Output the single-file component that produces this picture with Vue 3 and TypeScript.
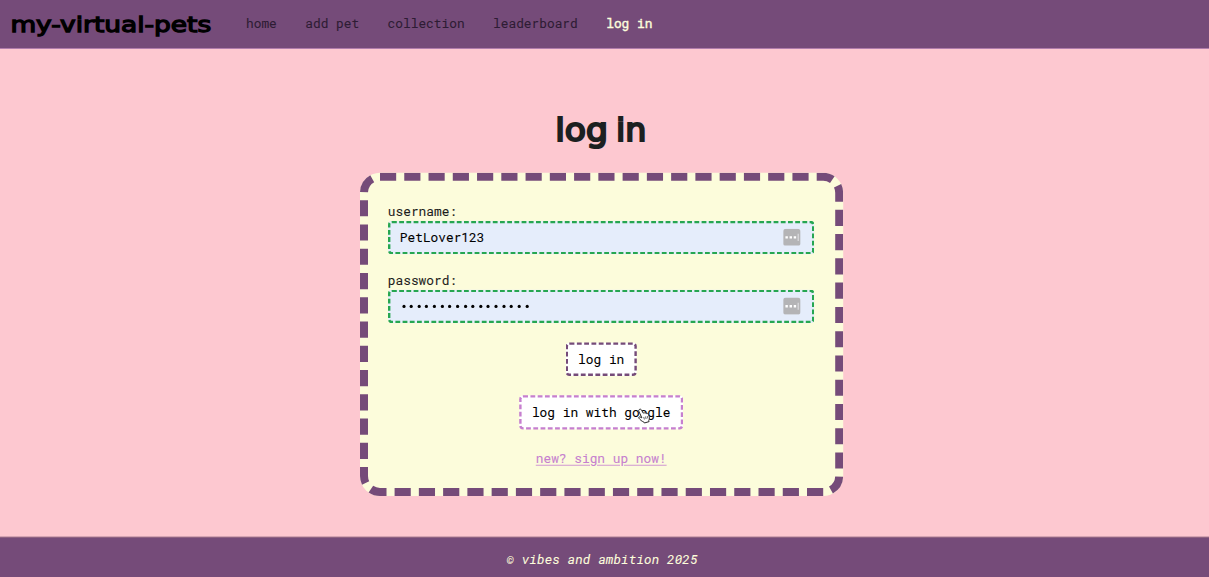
<script setup lang="ts">
import { ref } from 'vue'

interface NavItem {
  label: string
  active?: boolean
}

const navItems: NavItem[] = [
  { label: 'home' },
  { label: 'add pet' },
  { label: 'collection' },
  { label: 'leaderboard' },
  { label: 'log in', active: true },
]

const username = ref('PetLover123')
const passwordLength = 17
</script>

<template>
  <div class="viewport">
    <div class="page">
      <header class="header">
        <div class="brand"><svg class="word" width="254" height="40"><text x="0" y="31" textLength="251" lengthAdjust="spacingAndGlyphs">my-virtual-pets</text></svg></div>
        <nav class="nav">
          <a v-for="item in navItems" :key="item.label" :class="{ active: item.active }">{{ item.label }}</a>
        </nav>
      </header>

      <main class="main">
        <h1 class="title"><svg class="word" width="112" height="60"><text x="-2" y="40.5" textLength="66" lengthAdjust="spacingAndGlyphs">log</text><text x="74" y="40.5" textLength="38" lengthAdjust="spacingAndGlyphs">in</text></svg></h1>
        <form class="card">
          <svg class="card-border" width="604" height="404"><rect x="5" y="5" width="594" height="394" rx="20" pathLength="1536" stroke-dasharray="16 8" fill="none" stroke="#754b79" stroke-width="10" /></svg>
          <label class="label">username:</label>
          <div class="field">
            <span>{{ username }}</span>
            <svg class="key" viewBox="0 0 17 17"><rect width="17" height="17" rx="2.8" fill="#b4b4b6" /><path d="M2.200 7.300h2.400v2.400H2.200zM6.300 7.300h2.400v2.400H6.300zM10.400 7.300h2.400v2.400h-2.400z" fill="#fff" /><path d="M14.800 5v7" stroke="#e4e4e6" stroke-width="1" /></svg>
          </div>
          <label class="label">password:</label>
          <div class="field">
            <span class="dots"><i v-for="n in passwordLength" :key="n"></i></span>
            <svg class="key" viewBox="0 0 17 17"><rect width="17" height="17" rx="2.8" fill="#b4b4b6" /><path d="M2.200 7.300h2.400v2.400H2.200zM6.300 7.300h2.400v2.400H6.300zM10.400 7.300h2.400v2.400h-2.400z" fill="#fff" /><path d="M14.800 5v7" stroke="#e4e4e6" stroke-width="1" /></svg>
          </div>
          <button type="button" class="btn">log in</button>
          <button type="button" class="btn google">
            log in with google
            <svg class="cursor" viewBox="0 0 14 16"><path d="M2 1.200c.9-.5 1.700 0 2.100.8l1.700 3.100c.5-.6 1.400-.5 1.800.1.600-.5 1.500-.3 1.800.4.800-.3 1.500.1 1.800.9l.8 2.300c.4 1.500.1 2.600-.5 3.600l.3 1.400-4.800 1.400-.8-1.200C4.200 13.500 2.800 12 1.300 10.200c-.5-.9.4-1.600 1.300-1.200l1.800.9L1.200 3c-.3-.8 0-1.400.8-1.800z" fill="#fff" stroke="#222" stroke-width="1" /><path d="M6.300 9l.7 2.600M8.100 8.500l.7 2.600M9.900 8l.7 2.600" stroke="#222" stroke-width=".7" fill="none" /></svg>
          </button>
          <a class="signup">new? sign up now!</a>
        </form>
      </main>

      <footer class="footer">© vibes and ambition 2025</footer>
    </div>
  </div>
</template>

<style>
body {
  overflow: hidden;
  background: #fdc8d0;
}
</style>

<style scoped>
.viewport {
  height: 577px;
  overflow: hidden;
}
.page {
  width: 1512px;
  height: 722px;
  display: flex;
  flex-direction: column;
  transform: scale(0.8);
  transform-origin: 0 0;
  background: #fdc8d0;
  color: #1c1c1c;
  font-family: "Roboto Mono", "DejaVu Sans Mono", "Liberation Mono", monospace;
  font-size: 16.05px;
  line-height: 20px;
  -webkit-text-stroke: 0.12px currentColor;
}
.header {
  box-sizing: border-box;
  height: 60.5px;
  flex: none;
  display: flex;
  align-items: center;
  padding: 0 0 2px 13px;
  background: #754b79;
  border-bottom: 1px solid #b884b5;
}
.word {
  display: block;
  overflow: visible;
  font-family: "DejaVu Sans", sans-serif;
  font-weight: 400;
  stroke-linejoin: miter;
  stroke-miterlimit: 2;
}
.brand {
  width: 294.5px;
  font-size: 27px;
}
.brand .word {
  fill: #000;
  stroke: #000;
  stroke-width: 1.6px;
}
.nav {
  display: flex;
  gap: 35.6px;
  color: #2e1c34;
}
.nav .active {
  color: #fdfddc;
  -webkit-text-stroke-width: 0.5px;
}
.main {
  flex: 1;
  width: 1503.5px;
  display: flex;
  flex-direction: column;
  align-items: center;
}
.title {
  height: 60px;
  margin: 75px 0 20.5px;
  font-size: 40.5px;
}
.title .word {
  fill: #1c2020;
  stroke: #1c2020;
  stroke-width: 2.6px;
}
.card {
  box-sizing: border-box;
  position: relative;
  width: 604px;
  height: 404px;
  border-radius: 25px;
  background: #fcfcdb;
  padding: 38px 35.5px 0 35px;
  display: flex;
  flex-direction: column;
  align-items: center;
}
.card-border {
  position: absolute;
  left: 0;
  top: 0;
}
.label {
  align-self: flex-start;
  height: 21.5px;
}
.field {
  box-sizing: border-box;
  width: 100%;
  height: 42px;
  margin-bottom: 22.5px;
  padding: 0 14.5px 0 12px;
  display: flex;
  align-items: center;
  justify-content: space-between;
  border: 3px dashed #26a651;
  border-radius: 5px;
  background: #e5edfb;
  color: #000;
}
.key {
  width: 21.5px;
  height: 21.5px;
}
.dots {
  display: flex;
}
.dots i {
  width: 4px;
  height: 4px;
  margin: 0 2.8px 0 2.83px;
  border-radius: 50%;
  background: #000;
}
.btn {
  box-sizing: border-box;
  position: relative;
  height: 42.5px;
  padding: 0 12.5px;
  margin-top: 1.5px;
  border: 3px dashed #754b79;
  border-radius: 5px;
  background: #fff;
  color: #000;
  font: inherit;
  -webkit-text-stroke: inherit;
}
.google {
  margin: 24px 0 26.5px;
  border-color: #c67fcf;
}
.cursor {
  position: absolute;
  left: 145px;
  top: 13px;
  width: 17px;
  height: 20px;
}
.signup {
  color: #c67fcf;
  text-decoration: underline;
  text-underline-offset: 2px;
}
.footer {
  box-sizing: border-box;
  height: 51.5px;
  flex: none;
  padding: 17px 7px 0 0;
  border-top: 1px solid #a17386;
  background: #754b79;
  color: #fdfddc;
  font-style: italic;
  letter-spacing: 0.15px;
  text-align: center;
}
</style>
